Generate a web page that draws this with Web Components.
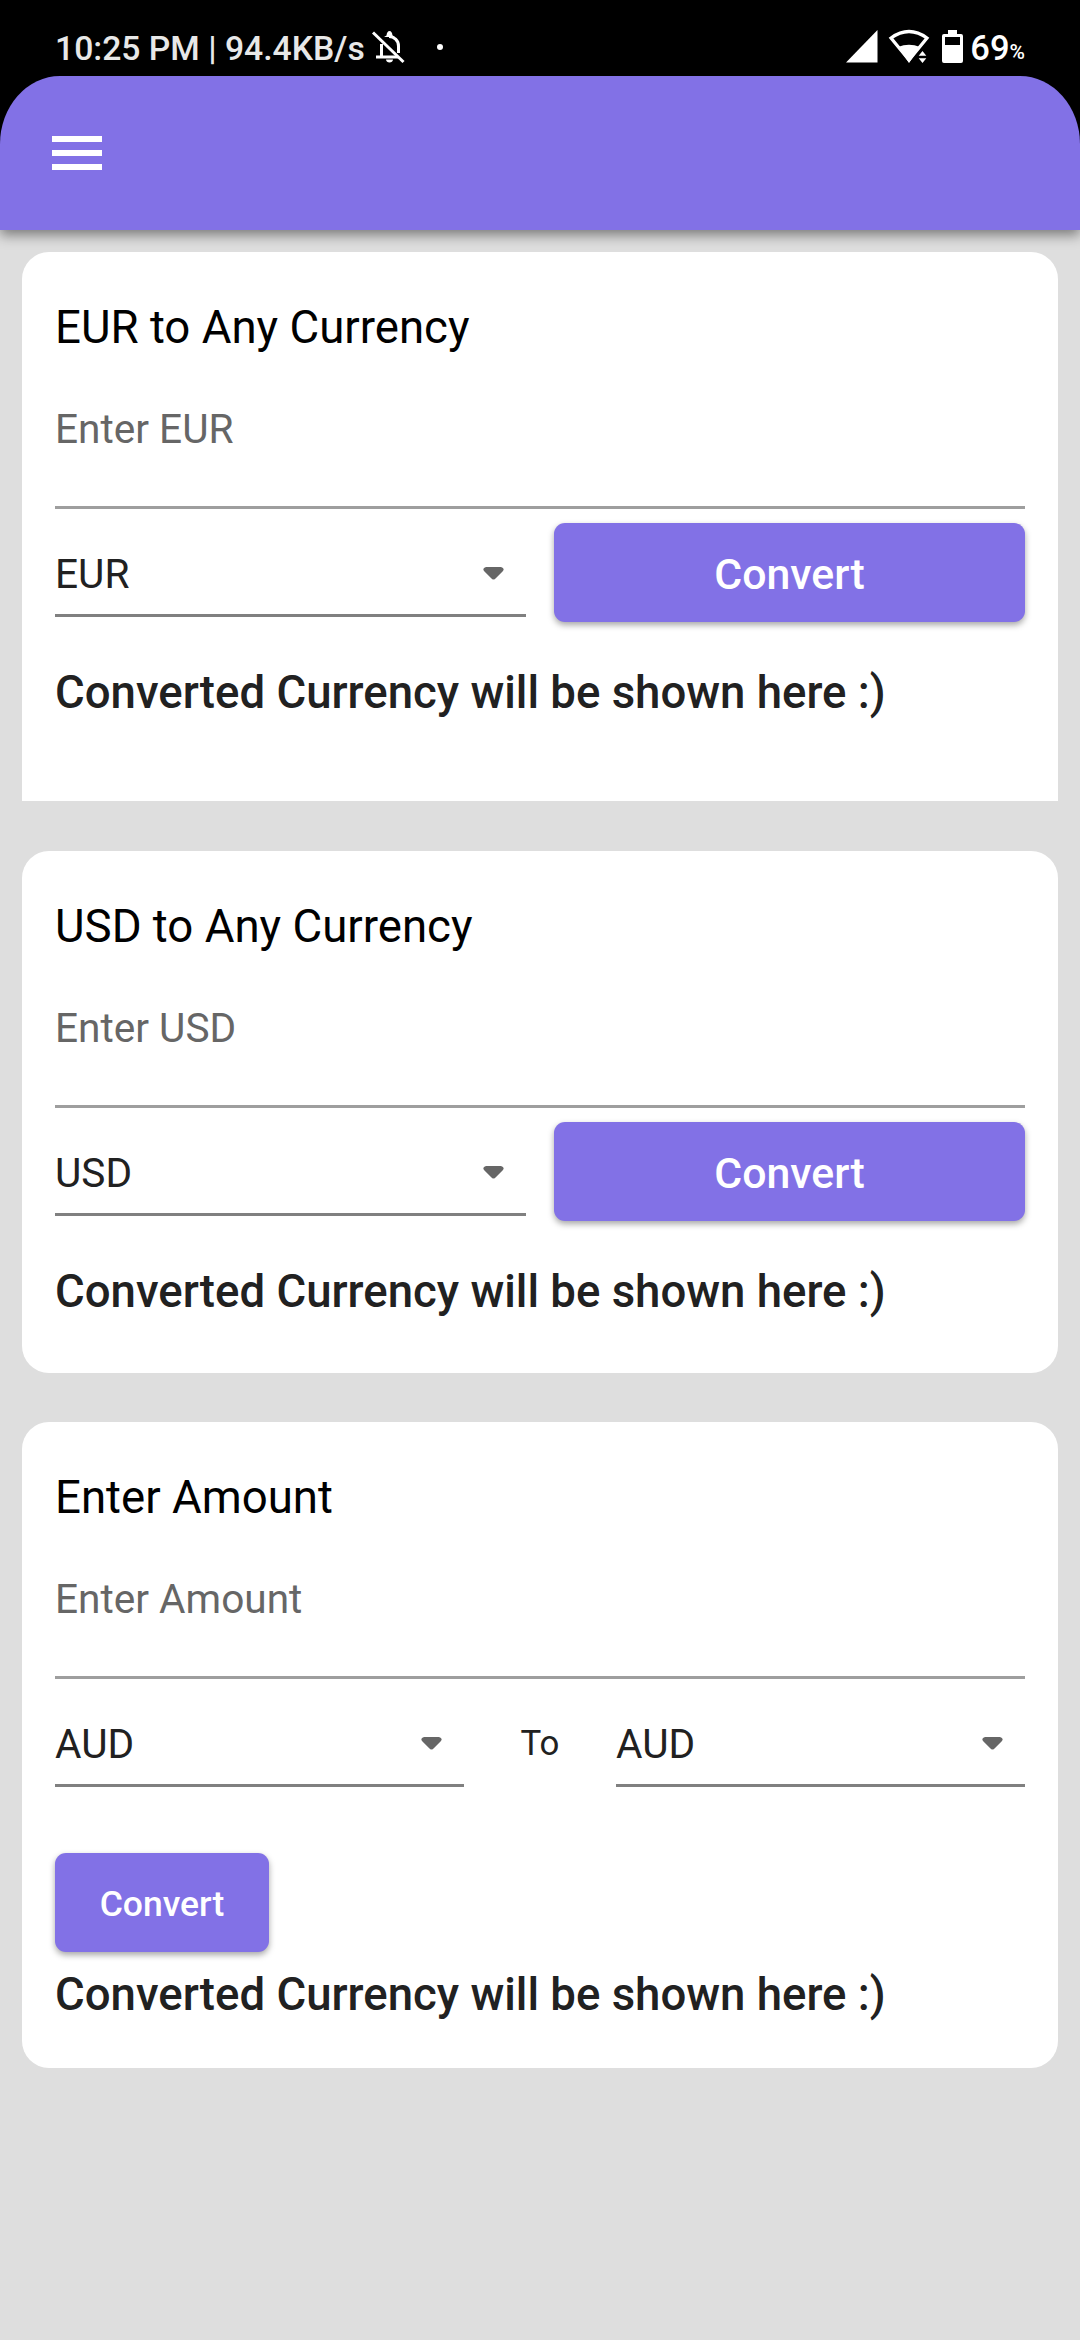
<!DOCTYPE html>
<html lang="en">
<head>
<meta charset="utf-8">
<title>Currency Converter</title>
<style>
body{margin:0;background:#dedede;font-family:Roboto,sans-serif;color:#212121}
main{display:flex;flex-direction:column;padding:22px 22px 0}
converter-card.usd{margin-top:50px}
converter-card.any{margin-top:49px}
.row{display:flex;align-items:flex-start}
</style>
</head>
<body>
<status-bar></status-bar>
<app-header></app-header>
<main>
<converter-card class="eur" heading="EUR to Any Currency" style="--h:549px;--r:27px 27px 0 0">
  <text-field label="Enter EUR"></text-field>
  <div class="row" style="padding-top:14px">
    <currency-select value="EUR" style="width:471px"></currency-select>
    <convert-button style="width:471px;margin-left:28px;--fs:42.8px">Convert</convert-button>
  </div>
  <result-line style="margin-top:39px">Converted Currency will be shown here :)</result-line>
</converter-card>
<converter-card class="usd" heading="USD to Any Currency" style="--h:522px;--r:27px">
  <text-field label="Enter USD"></text-field>
  <div class="row" style="padding-top:14px">
    <currency-select value="USD" style="width:471px"></currency-select>
    <convert-button style="width:471px;margin-left:28px;--fs:42.8px">Convert</convert-button>
  </div>
  <result-line style="margin-top:39px">Converted Currency will be shown here :)</result-line>
</converter-card>
<converter-card class="any" heading="Enter Amount" style="--h:646px;--r:27px">
  <text-field label="Enter Amount"></text-field>
  <div class="row" style="padding-top:14px">
    <currency-select value="AUD" style="width:409px"></currency-select>
    <span style="width:152px;text-align:center;font-size:34.8px;line-height:100px;height:93px">To</span>
    <currency-select value="AUD" style="width:409px"></currency-select>
  </div>
  <convert-button style="width:214px;margin-top:66px;--fs:35.5px">Convert</convert-button>
  <result-line style="margin-top:11px">Converted Currency will be shown here :)</result-line>
</converter-card>
</main>
<script>
const define = (name, html) => customElements.define(name, class extends HTMLElement {
  connectedCallback() {
    if (this.shadowRoot) return;
    const t = document.createElement('template');
    t.innerHTML = html.replace(/\{(\w+)\}/g, (_, k) => this.getAttribute(k) || '');
    this.attachShadow({mode: 'open'}).append(t.content.cloneNode(true));
  }
});

define('status-bar', `<style>
:host{display:flex;align-items:flex-start;height:76px;background:#000;color:#e8e8e8;font-weight:500;font-size:33.7px;line-height:97px;padding:0 55px;box-sizing:border-box;white-space:nowrap}
.time{width:309px}
.sp{flex:1}svg{display:block;flex:none}.pc{font-size:21px;line-height:105px}.lvl{color:#fff}.num{font-size:34.5px;line-height:96px}
</style>
<span class="time">10:25 PM | 94.4KB/s</span>
<svg width="80" height="76" viewBox="364 0 80 76" fill="none" stroke="#fff" stroke-width="3"><path d="M381.500 57V44M389 36.500c5 0 9.500 4 9.500 9.500v7M376 57h22"/><path d="M384 37l2.500-1.500q.5-4.500 3-4.500t3 4.500l2.500 1.500z" fill="#fff" stroke="none"/><path d="M373 32.500l30.500 29.500"/><path d="M386 59.500h7c0 4-7 4-7 0" fill="#fff" stroke="none"/><circle cx="440" cy="47" r="3" fill="#fff" stroke="none"/></svg>
<span class="sp"></span>
<svg width="124" height="76" viewBox="846 0 124 76"><path d="M846 62.500L877.500 30V62.500Z" fill="#fff"/><path d="M891 38q18-13 36 0L909 60Z" fill="none" stroke="#fff" stroke-width="3.200"/><path d="M898 47q11-4.500 22 0L909 63Z" fill="#fff"/><path d="M922.500 49l6 7.500-6 8-6-8z"/><path d="M922.500 51l3.800 4.800h-7.600zM922.500 63l3.800-4.800h-7.600z" fill="#fff"/><path fill-rule="evenodd" d="M948 30h9v4h4q2 0 2 2v25q0 2-2 2h-17q-2 0-2-2V36q0-2 2-2h4zM945 37v8h15v-8z" fill="#fff"/></svg>
<span class="lvl num">69</span><span class="lvl pc">%</span>`);

define('app-header', `<style>
:host{display:block;height:154px;background:linear-gradient(#000 80px,#8271e6 80px);box-shadow:0 5px 12px rgba(0,0,0,.45)}
header{height:154px;background:#8271e6;border-radius:60px 60px 0 0/68px 68px 0 0;display:flex;align-items:center;padding-left:52px;box-sizing:border-box}
svg{display:block}
</style><header><svg width="50" height="34" fill="#fff"><path d="M0 0h50v6H0zM0 14h50v6H0zM0 28h50v6H0z"/></svg></header>`);

define('converter-card', `<style>
:host{display:block;height:var(--h);background:#fff;border-radius:var(--r);padding:0 33px;box-sizing:border-box}
h2{margin:0;padding-top:46px;font-weight:400;font-size:45.6px;line-height:60px;color:#000}
</style><h2>{heading}</h2><slot></slot>`);

define('text-field', `<style>
:host{display:block;height:151px;border-bottom:3px solid #9e9e9e;box-sizing:border-box;padding-top:41px;color:#666;font-size:40.6px;line-height:60px}
</style>{label}`);

define('currency-select', `<style>
:host{display:flex;justify-content:space-between;height:94px;border-bottom:3px solid #808080;padding-right:22px;box-sizing:border-box;font-size:40.6px;line-height:103px}
svg{margin-top:44px}
</style><span>{value}</span><svg width="21" height="13" viewBox="0 0 21 13"><path d="M3 0h15q4 1 2 4l-7 7q-2.500 3-5 0L1 4q-2-3 2-4z" fill="#666"/></svg>`);

define('convert-button', `<style>
:host{display:block;height:99px;border-radius:11px;background:#8271e6;color:#fff;font-weight:500;font-size:var(--fs);line-height:102px;text-align:center;box-shadow:0 3px 6px rgba(0,0,0,.35)}
</style><slot></slot>`);

define('result-line', `<style>
:host{display:block;font-weight:500;font-size:45.55px;line-height:64px;color:#212121}
</style><slot></slot>`);
</script>
</body>
</html>
